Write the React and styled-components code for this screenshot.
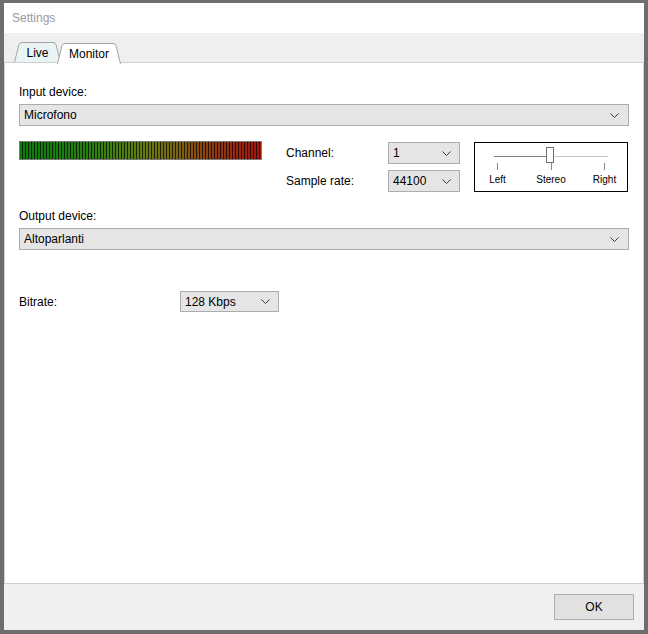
import React from "react";
import styled, { createGlobalStyle } from "styled-components";

const GlobalStyle = createGlobalStyle`
  html, body {
    margin: 0;
    padding: 0;
    background: #6e6e6e;
  }
  body {
    font-family: "Liberation Sans", Arial, sans-serif;
    font-size: 12px;
    color: #000;
  }
`;

const Frame = styled.div`
  width: 648px;
  height: 634px;
  box-sizing: border-box;
  border: 4px solid #6e6e6e;
  border-top-width: 3px;
  display: flex;
  flex-direction: column;
  background: #f0f0f0;
`;

const TitleBar = styled.div`
  height: 30px;
  background: #fff;
  display: flex;
  align-items: center;
  padding-left: 8px;
  color: #9a9a9a;
`;

const TabStrip = styled.div`
  height: 29px;
  background: #efefef;
  display: flex;
  align-items: flex-end;
  padding-left: 10px;
`;

const TabItem = styled.div`
  position: relative;
  width: ${(p) => p.$w}px;
  height: 20px;
  margin-left: ${(p) => (p.$overlap ? -4 : 0)}px;
  margin-bottom: ${(p) => (p.$active ? -1 : 0)}px;
  z-index: ${(p) => (p.$active ? 2 : 1)};
  display: flex;
  align-items: center;
  justify-content: center;
  padding-top: 1px;
  box-sizing: border-box;

  svg {
    position: absolute;
    left: 0;
    top: 0;
    z-index: -1;
  }
`;

const TabLabel = styled.span`
  position: relative;
`;

const Panel = styled.div`
  flex: 1;
  background: #fff;
  border: 1px solid #cfcfcf;
  display: flex;
  flex-direction: column;
  padding: 21px 14px 0 14px;
  position: relative;
  z-index: 1;
`;

const Label = styled.div`
  line-height: 16px;
  height: 16px;
  white-space: nowrap;
`;

const Combo = styled.div`
  box-sizing: border-box;
  width: ${(p) => (p.$w ? `${p.$w}px` : "100%")};
  height: ${(p) => p.$h || 22}px;
  background: #e5e5e5;
  border: 1px solid #acacac;
  display: flex;
  align-items: center;
  justify-content: space-between;
  padding: 0 ${(p) => (p.$w ? 8 : 9)}px 0 4px;
`;

const Field = styled.div`
  display: flex;
  flex-direction: column;
  gap: 4px;
  margin-top: ${(p) => p.$mt || 0}px;
`;

const MeterRow = styled.div`
  display: flex;
  align-items: flex-start;
  margin-top: 15px;
  height: 52px;
`;

const Meter = styled.div`
  width: 243px;
  height: 19px;
  box-sizing: border-box;
  border: 1px solid #7a7a7a;
  background:
    repeating-linear-gradient(
      90deg,
      rgba(0, 0, 0, 0) 0 2px,
      rgba(0, 0, 0, 0.7) 2px 3px
    ),
    linear-gradient(
      90deg,
      #0b7a0b 0%,
      #2a7f10 30%,
      #617d10 50%,
      #7a6410 65%,
      #8e3a10 80%,
      #a21510 100%
    );
`;

const FormatGrid = styled.div`
  display: grid;
  grid-template-columns: 102px 72px;
  row-gap: 6px;
  margin: 1px 0 0 24px;
  align-items: center;
`;

const PanBox = styled.div`
  box-sizing: border-box;
  width: 154px;
  height: 50px;
  margin: 1px 0 0 14px;
  border: 1px solid #000;
  padding: 0 19px;
  display: flex;
  flex-direction: column;
`;

const Track = styled.div`
  position: relative;
  margin-top: 13px;
  height: 1px;
  background: linear-gradient(90deg, #7c7c7c 0 50%, #c4c4c4 50% 100%);
`;

const Thumb = styled.div`
  position: absolute;
  left: 52px;
  top: -9px;
  width: 8px;
  height: 16px;
  box-sizing: border-box;
  background: #fff;
  border: 1px solid #707070;
`;

const Stops = styled.div`
  display: flex;
  justify-content: space-between;
  padding: 0 3px 0 3px;
  margin-top: 6px;
`;

const Stop = styled.div`
  width: 1px;
  display: flex;
  flex-direction: column;
  align-items: center;
`;

const Tick = styled.div`
  width: 1px;
  height: 7px;
  background: #8a8a8a;
`;

const StopLabel = styled.div`
  margin-top: 4px;
  font-size: 10px;
  line-height: 12px;
  white-space: nowrap;
`;

const BitrateRow = styled.div`
  display: flex;
  align-items: center;
  margin-top: 41px;
`;

const Footer = styled.div`
  height: 46px;
  display: flex;
  justify-content: flex-end;
  align-items: flex-start;
  padding: 10px 10px 0 0;
  box-sizing: border-box;
`;

const Button = styled.button`
  width: 80px;
  height: 26px;
  background: #e1e1e1;
  border: 1px solid #adadad;
  font-family: "Liberation Sans", Arial, sans-serif;
  font-size: 12px;
  color: #000;
  padding: 0;
`;

function Chevron() {
  return (
    <svg width="9" height="5" viewBox="0 0 9 5">
      <path d="M0.5 0.5 L4.5 4.5 L8.5 0.5" fill="none" stroke="#3a3a3a" strokeWidth="1" />
    </svg>
  );
}

function Tab({ label, w, active, overlap }) {
  const h = active ? 21 : 20;
  const d = `M0.5 ${h} L5 2.5 Q5.8 0.5 8 0.5 L${w - 8} 0.5 Q${w - 5.8} 0.5 ${w - 5} 2.5 L${w - 0.5} ${h}`;
  return (
    <TabItem $w={w} $active={active} $overlap={overlap}>
      <svg width={w} height={h} viewBox={`0 0 ${w} ${h}`}>
        <path d={d} fill={active ? "#ffffff" : "#eaf4f4"} stroke="#a4a4a4" strokeWidth="1" />
      </svg>
      <TabLabel>{label}</TabLabel>
    </TabItem>
  );
}

function Select({ value, w, h }) {
  return (
    <Combo $w={w} $h={h}>
      <span>{value}</span>
      <Chevron />
    </Combo>
  );
}

export default function App() {
  return (
    <>
      <GlobalStyle />
      <Frame>
        <TitleBar>Settings</TitleBar>
        <TabStrip>
          <Tab label="Live" w={47} />
          <Tab label="Monitor" w={64} active overlap />
        </TabStrip>
        <Panel>
          <Field>
            <Label>Input device:</Label>
            <Select value="Microfono" />
          </Field>
          <MeterRow>
            <Meter />
            <FormatGrid>
              <Label>Channel:</Label>
              <Select value="1" w={72} />
              <Label>Sample rate:</Label>
              <Select value="44100" w={72} />
            </FormatGrid>
            <PanBox>
              <Track>
                <Thumb />
              </Track>
              <Stops>
                <Stop>
                  <Tick />
                  <StopLabel>Left</StopLabel>
                </Stop>
                <Stop>
                  <Tick />
                  <StopLabel>Stereo</StopLabel>
                </Stop>
                <Stop>
                  <Tick />
                  <StopLabel>Right</StopLabel>
                </Stop>
              </Stops>
            </PanBox>
          </MeterRow>
          <Field $mt={15}>
            <Label>Output device:</Label>
            <Select value="Altoparlanti" />
          </Field>
          <BitrateRow>
            <Label style={{ width: 161 }}>Bitrate:</Label>
            <Select value="128 Kbps" w={99} h={21} />
          </BitrateRow>
        </Panel>
        <Footer>
          <Button>OK</Button>
        </Footer>
      </Frame>
    </>
  );
}
